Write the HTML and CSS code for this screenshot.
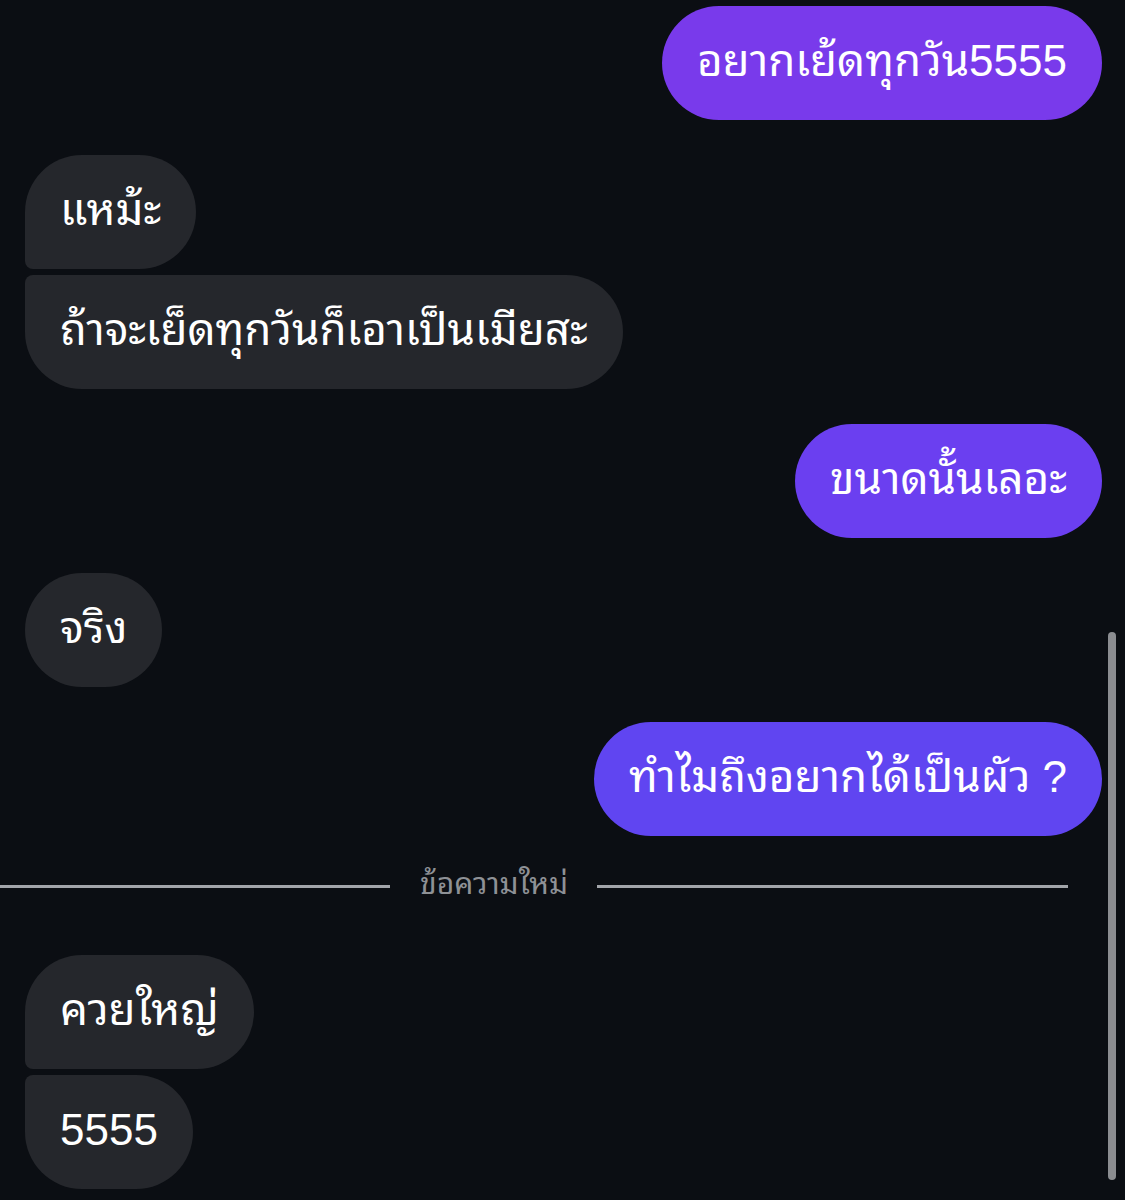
FILE: index.html
```html
<!DOCTYPE html>
<html lang="th">
<head>
  <meta charset="UTF-8" />
  <meta name="viewport" content="width=device-width, initial-scale=1.0"/>
  <title>แชท</title>
  <link rel="stylesheet" href="styles.css">
</head>
<body>
  <div class="chat">
    <div class="group sent">
      <div class="bubble tone-1">อยากเย้ดทุกวัน5555</div>
    </div>

    <div class="group received">
      <div class="bubble first">แหม้ะ</div>
      <div class="bubble last">ถ้าจะเย็ดทุกวันก็เอาเป็นเมียสะ</div>
    </div>

    <div class="group sent">
      <div class="bubble tone-2">ขนาดนั้นเลอะ</div>
    </div>

    <div class="group received">
      <div class="bubble">จริง</div>
    </div>

    <div class="group sent">
      <div class="bubble tone-3">ทำไมถึงอยากได้เป็นผัว ?</div>
    </div>

    <div class="divider">
      <span class="line line-left"></span>
      <span class="divider-text">ข้อความใหม่</span>
      <span class="line line-right"></span>
    </div>

    <div class="group received">
      <div class="bubble first">ควยใหญ่</div>
      <div class="bubble last">5555</div>
    </div>
  </div>

  <div class="scrollbar"></div>
</body>
</html>
```

FILE: styles.css
```css
body {
  margin: 0;
  background-color: #0b0e13;
  color: #ffffff;
  font-family: "Liberation Sans", "Noto Sans Thai Looped", "Noto Sans Thai", "Noto Sans", sans-serif;
  height: 1200px;
  overflow: hidden;
}

.chat {
  padding: 6px 23px 0 25px;
  display: flex;
  flex-direction: column;
  gap: 35px;
}

.group {
  display: flex;
  flex-direction: column;
  gap: 6px;
}

.sent {
  align-items: flex-end;
}

.received {
  align-items: flex-start;
}

.bubble {
  box-sizing: border-box;
  height: 114px;
  padding: 0 35px 4px 35px;
  display: flex;
  align-items: center;
  border-radius: 57px;
  font-size: 44px;
  line-height: 1;
  white-space: nowrap;
  background-color: #25272c;
}

.received .first {
  border-bottom-left-radius: 8px;
}

.received .last {
  border-top-left-radius: 8px;
}

.tone-1 {
  background-color: #793aeb;
}

.tone-2 {
  background-color: #6b3ff0;
}

.tone-3 {
  background-color: #6045f1;
}

.divider {
  display: flex;
  align-items: center;
  height: 30px;
  margin: 0 34px 19px -25px;
}

.line {
  height: 3px;
  background-color: #a2a5aa;
}

.line-left {
  width: 390px;
}

.line-right {
  flex: 1;
}

.divider-text {
  margin: 0 29px 4px 30px;
  font-size: 30px;
  line-height: 1;
  color: #8e9196;
}

.scrollbar {
  position: absolute;
  left: 1108px;
  top: 632px;
  width: 8px;
  height: 548px;
  border-radius: 4px;
  background-color: #8b8d91;
}
```
